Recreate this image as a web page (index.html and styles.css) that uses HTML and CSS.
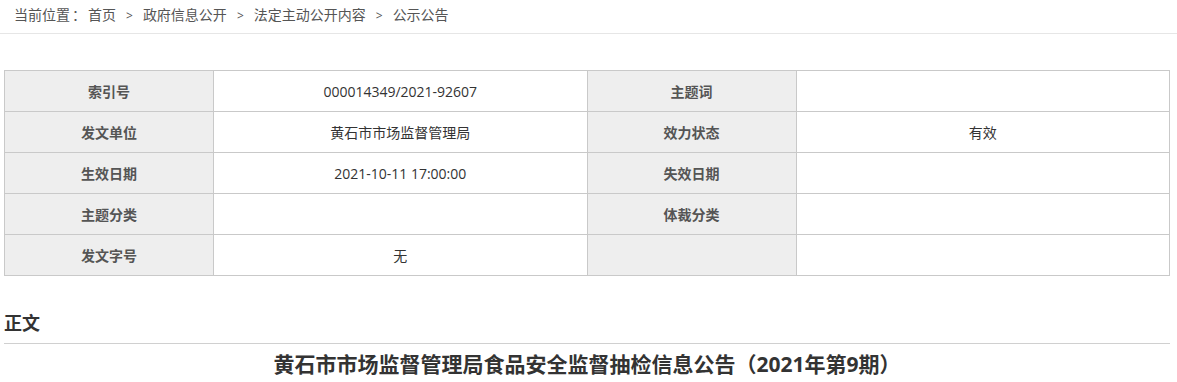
FILE: index.html
```html
<!DOCTYPE html>
<html lang="zh-CN">
<head>
    <meta charset="UTF-8">
    <meta name="viewport" content="width=device-width, initial-scale=1.0">
    <title>公示公告</title>
    <link rel="stylesheet" href="styles.css">
</head>
<body>
    <!-- Breadcrumb -->
    <div class="crumbs">
        当前位置<span class="colon">：</span><a href="#">首页</a><span class="sep">&gt;</span><a href="#">政府信息公开</a><span class="sep">&gt;</span><a href="#">法定主动公开内容</a><span class="sep">&gt;</span><a href="#">公示公告</a>
    </div>

    <div class="main">
        <!-- Document info table -->
        <table class="info-table">
            <tr>
                <th>索引号</th>
                <td>000014349/2021-92607</td>
                <th>主题词</th>
                <td></td>
            </tr>
            <tr>
                <th>发文单位</th>
                <td>黄石市市场监督管理局</td>
                <th>效力状态</th>
                <td>有效</td>
            </tr>
            <tr>
                <th>生效日期</th>
                <td>2021-10-11 17:00:00</td>
                <th>失效日期</th>
                <td></td>
            </tr>
            <tr>
                <th>主题分类</th>
                <td></td>
                <th>体裁分类</th>
                <td></td>
            </tr>
            <tr>
                <th>发文字号</th>
                <td>无</td>
                <th></th>
                <td></td>
            </tr>
        </table>

        <!-- Body -->
        <h2 class="section-title">正文</h2>
        <h1 class="doc-title">黄石市市场监督管理局食品安全监督抽检信息公告（2021年第9期）</h1>
    </div>
</body>
</html>
```

FILE: styles.css
```css
body {
    margin: 0;
    padding: 0;
    font-family: "Open Sans", "Noto Sans CJK SC", "Microsoft YaHei", sans-serif;
    font-size: 14px;
    color: #333;
    background: #fff;
}
a {
    color: inherit;
    text-decoration: none;
}
.crumbs {
    height: 33px;
    line-height: 30px;
    padding-left: 14px;
    color: #555;
    border-bottom: 1px solid #e6e6e6;
}
.crumbs .colon {
    margin: 0 2px 0 2px;
}
.crumbs .sep {
    margin: 0 10px;
    font-size: 12px;
}
.main {
    width: 1166px;
    margin-left: 4px;
    padding-top: 36px;
}
.info-table {
    width: 100%;
    border-collapse: collapse;
    table-layout: fixed;
}
.info-table th,
.info-table td {
    height: 40px;
    padding: 0;
    border: 1px solid #c9c9c9;
    text-align: center;
    font-size: 14px;
}
.info-table th {
    width: 208px;
    background: #eee;
    font-weight: bold;
    color: #555;
}
.info-table td {
    color: #333;
}
.section-title {
    margin: 34px 0 0;
    padding-bottom: 6px;
    font-size: 18px;
    line-height: 27px;
    font-weight: bold;
    color: #333;
    border-bottom: 1px solid #d0d0d0;
}
.doc-title {
    margin: 5px 0 0;
    text-align: center;
    font-size: 21px;
    line-height: 30px;
    font-weight: bold;
    color: #333;
}
```
